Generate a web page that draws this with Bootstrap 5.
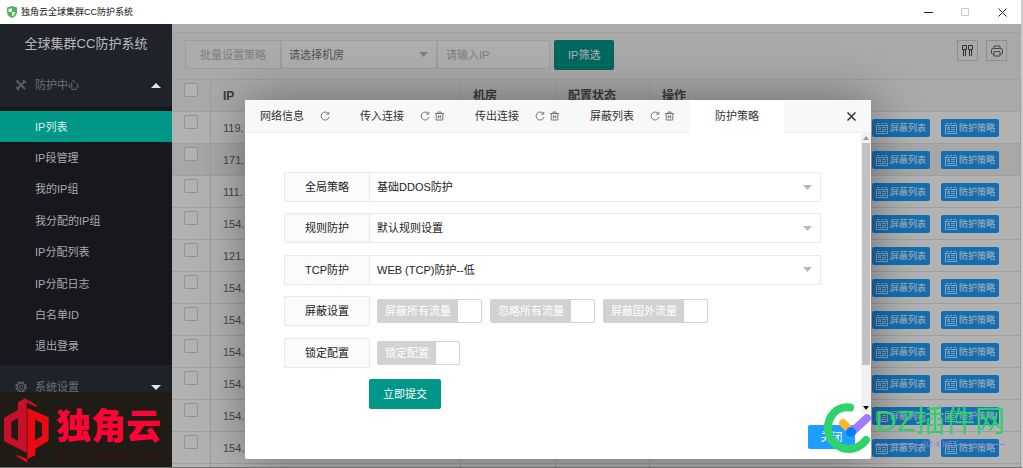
<!DOCTYPE html>
<html lang="zh-CN">
<head>
<meta charset="utf-8">
<meta name="viewport" content="width=device-width, initial-scale=1">
<title>独角云全球集群CC防护系统</title>
<link href="https://cdn.jsdelivr.net/npm/bootstrap@5.3.0/dist/css/bootstrap.min.css" rel="stylesheet">
<style>
  body { font-family: "Liberation Sans", "Noto Sans CJK SC", sans-serif; font-size: 11px; line-height: 16px; color: #333; background: #fff; }
  svg { display: block; flex: none; }
  button, input, select { font: inherit; color: inherit; }
  .app { height: 100vh; overflow: hidden; border-right: 2px solid #c8c8c8; border-bottom: 1px solid #6d6d6d; }
  .titlebar { flex: none; height: 24px; font-size: 9px; color: #111; padding: 0 14px 0 7px; }
  .titlebar button { border: 0; background: none; padding: 0; }

  .sidebar { width: 172px; background: #20222a; color: #b5b6b9; }
  .brand { height: 39px; font-size: 13px; color: #b9babd; }
  .group-head { height: 44px; padding: 0 11px 0 15px; color: #6d6f76; border: 0; background: none; }
  .group-head svg { color: #5c5e65; }
  .group-head .caret { color: #e4e4e4; }
  .submenu { background: #16181d; height: 258px; padding: 4px 0 3px; }
  .submenu a { flex: 1 1 0; padding-left: 35px; color: #a9aaac; text-decoration: none; display: flex; align-items: center; }
  .submenu a.active { background: #009688; color: #d5f0ed; }
  .logo { height: 75px; background: #1e1c14; left: 0; right: 0; bottom: 0; }
  .logo-name { font: 900 35px/44px "Noto Sans CJK SC", sans-serif; color: #ff0336; }
  .logo-sub { font-size: 10px; line-height: 12px; letter-spacing: 5px; color: #4c0d0b; }

  .main { background: #f2f2f2; }
  .strip { height: 9px; background: #f3f6f8; border-bottom: 1px solid #e6e6e6; }
  .toolbar { height: 46px; padding: 7px 14px 0 13px; }
  .toolbar .ctl { height: 29px; border: 1px solid #e2e2e2; background: #fafafa; border-radius: 0; font-size: 11px; padding: 0 8px; }
  .toolbar .batch { width: 96px; color: #b8b8b8; background: #f6f6f6; }
  .toolbar .room { width: 156px; color: #777; padding: 0 7px; }
  .toolbar .ip { width: 113px; }
  .toolbar .ip::placeholder { color: #b5b5b5; }
  .pick { appearance: none; background-repeat: no-repeat !important; background-position: right 8px center !important; background-image: url("data:image/svg+xml,%3Csvg xmlns='http://www.w3.org/2000/svg' width='9' height='5'%3E%3Cpath d='M0 0h9L4.500 5z' fill='%23b9b9b9'/%3E%3C/svg%3E") !important; }
  .btn-teal { background: #009688; color: #fff; border: 0; border-radius: 2px; height: 30px; font-size: 11px; padding: 0 14px; }
  .tool { width: 21px; height: 21px; border: 1px solid #ccc; background: none; padding: 0; color: #444; }

  .ip-table { width: 100%; table-layout: fixed; border-collapse: separate; border-spacing: 0; color: #666; }
  .ip-table th, .ip-table td { height: 32px; padding: 0 12px; border: 0 solid #e4e4e4; border-width: 1px 1px 0 0; overflow: hidden; white-space: nowrap; }
  .ip-table th { font-size: 12px; color: #555; }
  .ip-table td { background: #fff; }
  .ip-table tr.hover td { background: #f0f0f0; }
  .ip-table th:first-child, .ip-table td:first-child { vertical-align: top; padding-top: 3px; }
  .ip-table input { appearance: none; display: block; width: 14px; height: 14px; margin: 0; border: 1px solid #d2d2d2; border-radius: 2px; background: #fff; }
  .ip-table .actions { padding: 0 21px 0 0; }
  .act-list { gap: 11px; }
  .act { height: 18px; background: #1e9fff; color: #fff; border: 0; border-radius: 2px; font-size: 9px; padding: 0 4px; gap: 2px; }

  .shade { inset: 0; background: rgba(0,0,0,.3); }
  .dialog { top: 76px; left: 73px; right: 150px; background: #fff; border-radius: 2px; box-shadow: 1px 1px 50px rgba(0,0,0,.4); }
  .tabs { height: 33px; background: #f8f8f8; border-bottom: 1px solid #eee; color: #333; }
  .tab { padding: 0 15px; border: 0; background: none; height: 33px; }
  .tab.current { background: #fff; padding: 0 25px; }
  .tab svg { color: #777; }
  .dlg-body { height: 280px; }
  .scroll { width: 10px; background: #f1f1f1; padding: 3px 0; }
  .thumb { width: 8px; height: 222px; background: #c1c1c1; margin-top: 3px; }
  .policy { height: 237px; margin: 39px 40px 0 39px; }
  .field-label { width: 86px; height: 30px; border: 1px solid #e8e8e8; background: #fbfbfb; border-radius: 2px 0 0 2px; color: #222; }
  .field-select { height: 30px; border: 1px solid #e8e8e8; border-left: 0; border-radius: 0 2px 2px 0; background: #fff; padding: 0 7px; color: #222; }
  .flip-row { gap: 8px; padding-left: 7px; }
  .flip { height: 24px; border: 1px solid #d2d2d2; border-radius: 2px; background: #d2d2d2; color: #fff; padding-left: 7px; }
  .flip input { appearance: none; width: 23px; height: 22px; margin: 0 0 0 7px; background: #fff; border-radius: 1px; }
  .submit { margin-left: 85px; }
  .dlg-foot { height: 46px; padding: 2px 16px 0 0; }
  .btn-shut { height: 24px; width: 47px; background: #1e9fff; color: #fff; border: 0; border-radius: 2px; }

  .mark-site { right: 16px; bottom: 12px; pointer-events: none; }
  .mark-name { font-size: 30px; line-height: 36px; color: #2fcf6c; }
  .mark-sub { font: 8px/10px "Noto Sans CJK SC", sans-serif; color: #8d7fd8; }
  .mark-sub i { height: 1px; background: #8d7fd8; flex: 1; }
</style>
</head>
<body>
<svg width="0" height="0" class="position-absolute">
  <symbol id="i-refresh" viewBox="0 0 10 10"><path d="M8.300 2.600A4 4 0 1 0 9 6M8.800.8v2.400H6.300" fill="none" stroke="currentColor"/></symbol>
  <symbol id="i-trash" viewBox="0 0 10 10"><path d="M.5 2.500h9M3.500 2.300V1h3v1.300M1.700 2.700V9h6.600V2.700M3.800 4.200v3.300M6.200 4.200v3.300M3.500 5.800h3" fill="none" stroke="currentColor"/></symbol>
  <symbol id="i-cal" viewBox="0 0 12 12"><path d="M.5 2.500v9h11v-9M1 1.500h2.500M5 1.500h2M8.500 1.500H11M.5 3.500h11M2.500 5.500h2v2h-2zM6 5.500h4M6 7.500h4M2.500 9.500H10" fill="none" stroke="#fff" opacity=".75"/></symbol>
</svg>

<div class="app d-flex flex-column position-relative">
  <header class="titlebar d-flex align-items-center">
    <svg width="10" height="12" viewBox="0 0 10 12"><path d="M5 0 10 1.500V6q0 4-5 6Q0 10 0 6V1.500z" fill="#4db35b"/><path d="M5 2v4h3.500Q8 9 5 10.500V6H1.500V3z" fill="#dff3e0"/></svg>
    <span class="ms-1 flex-fill">独角云全球集群CC防护系统</span>
    <div class="d-flex align-items-center gap-4">
      <button type="button" aria-label="最小化" class="me-1"><svg width="9" height="9"><path d="M0 4.500h9" stroke="#222"/></svg></button>
      <button type="button" aria-label="最大化" class="me-1"><svg width="9" height="9"><path d="M.5.5h7v7h-7z" fill="none" stroke="#ccc"/></svg></button>
      <button type="button" aria-label="关闭窗口"><svg width="9" height="9"><path d="m.5.5 8 8m0-8-8 8" stroke="#222"/></svg></button>
    </div>
  </header>

  <div class="d-flex flex-fill overflow-hidden">
    <aside class="sidebar flex-shrink-0 position-relative overflow-hidden">
      <div class="brand d-flex align-items-center justify-content-center">全球集群CC防护系统</div>
      <button type="button" class="group-head w-100 d-flex align-items-center">
        <svg width="12" height="12" viewBox="0 0 12 12"><path d="m2 2 8 8M10 2 2 10" stroke="currentColor" stroke-width="2"/><path d="M1 3.500 3.500 1M8 1l3 3M1 8l3 3" stroke="currentColor" stroke-width="1.500"/></svg>
        <span class="ms-2 flex-fill text-start">防护中心</span>
        <svg class="caret" width="10" height="5"><path d="M0 5h10L5 0z" fill="currentColor"/></svg>
      </button>
      <nav class="submenu d-flex flex-column">
        <a class="active" href="#">IP列表</a>
        <a href="#">IP段管理</a>
        <a href="#">我的IP组</a>
        <a href="#">我分配的IP组</a>
        <a href="#">IP分配列表</a>
        <a href="#">IP分配日志</a>
        <a href="#">白名单ID</a>
        <a href="#">退出登录</a>
      </nav>
      <button type="button" class="group-head w-100 d-flex align-items-center">
        <svg width="12" height="12" viewBox="0 0 12 12" fill="none" stroke="currentColor"><circle cx="6" cy="6" r="4.800" stroke-width="2" stroke-dasharray="2.600 1.170"/><circle cx="6" cy="6" r="3.800"/><circle cx="6" cy="6" r="1.700"/></svg>
        <span class="ms-2 flex-fill text-start">系统设置</span>
        <svg class="caret" width="10" height="5"><path d="M0 0h10L5 5z" fill="currentColor"/></svg>
      </button>
      <div class="logo position-absolute d-flex align-items-center">
        <svg width="52" height="75" viewBox="0 0 156 225">
          <path d="M12 78 54 53V31L75 19l35 20v6L80 32v150L12 148zM34 90v46l20 11V79z" fill="#c8102a" fill-rule="evenodd"/>
          <path d="M82 48v164l-32-19v-5l32 13 24-11v-20l40-24V76zM105 83l21 11v38l-21 13z" fill="#ea0a12" fill-rule="evenodd"/>
        </svg>
        <div class="ps-1 pt-1">
          <div class="logo-name">独角云</div>
          <div class="logo-sub mt-1">DUJIAOYUN</div>
        </div>
      </div>
    </aside>

    <main class="main flex-fill position-relative overflow-hidden">
      <div class="strip"></div>
      <div class="toolbar d-flex align-items-start">
        <button type="button" class="ctl batch">批量设置策略</button>
        <select class="ctl room pick" aria-label="机房"><option>请选择机房</option></select>
        <input class="ctl ip" type="text" placeholder="请输入IP" aria-label="IP">
        <button type="button" class="btn-teal ms-1">IP筛选</button>
        <div class="ms-auto d-flex gap-2">
          <button type="button" class="tool d-flex align-items-center justify-content-center" aria-label="筛选列"><svg width="11" height="11"><path d="M.5.500h4v4h-4zM6.500.5h4v4h-4zM1.500 5v6M3.500 5v6M7.500 5v6M9.500 5v6" fill="none" stroke="currentColor"/></svg></button>
          <button type="button" class="tool d-flex align-items-center justify-content-center" aria-label="打印"><svg width="12" height="12"><path d="M3 3.500V1h6v2.500M3 9H1.500Q.5 9 .5 8V5q0-1.500 1.500-1.500h8q1.500 0 1.500 1.500v3q0 1-1 1H9M3 6.500h6V11H3z" fill="none" stroke="#666"/></svg></button>
        </div>
      </div>
      <table class="ip-table">
        <colgroup><col style="width:39px"><col style="width:250px"><col style="width:95px"><col style="width:94px"><col></colgroup>
        <thead><tr><th><input type="checkbox" aria-label="全选"></th><th>IP</th><th>机房</th><th>配置状态</th><th>操作</th></tr></thead>
        <tbody id="rows"></tbody>
      </table>

      <div class="shade position-absolute"></div>

      <section class="dialog position-absolute" role="dialog" aria-label="防护策略">
        <div class="tabs d-flex align-items-center">
          <button type="button" class="tab d-flex align-items-center"><span class="me-3">网络信息</span><svg width="10" height="10"><use href="#i-refresh"/></svg></button>
          <button type="button" class="tab d-flex align-items-center"><span class="me-3">传入连接</span><svg class="me-1" width="10" height="10"><use href="#i-refresh"/></svg><svg width="11" height="10"><use href="#i-trash"/></svg></button>
          <button type="button" class="tab d-flex align-items-center"><span class="me-3">传出连接</span><svg class="me-1" width="10" height="10"><use href="#i-refresh"/></svg><svg width="11" height="10"><use href="#i-trash"/></svg></button>
          <button type="button" class="tab d-flex align-items-center"><span class="me-3">屏蔽列表</span><svg class="me-1" width="10" height="10"><use href="#i-refresh"/></svg><svg width="11" height="10"><use href="#i-trash"/></svg></button>
          <button type="button" class="tab current">防护策略</button>
          <button type="button" class="tab ms-auto" aria-label="关闭"><svg width="9" height="9"><path d="m.5.5 8 8m0-8-8 8" stroke="#333" stroke-width="1.500"/></svg></button>
        </div>
        <div class="dlg-body d-flex">
          <form class="policy flex-fill d-flex flex-column justify-content-between">
            <div class="d-flex">
              <label class="field-label d-flex align-items-center justify-content-center" for="f1">全局策略</label>
              <select id="f1" class="field-select pick flex-fill"><option>基础DDOS防护</option></select>
            </div>
            <div class="d-flex">
              <label class="field-label d-flex align-items-center justify-content-center" for="f2">规则防护</label>
              <select id="f2" class="field-select pick flex-fill"><option>默认规则设置</option></select>
            </div>
            <div class="d-flex">
              <label class="field-label d-flex align-items-center justify-content-center" for="f3">TCP防护</label>
              <select id="f3" class="field-select pick flex-fill"><option>WEB (TCP)防护--低</option></select>
            </div>
            <div class="d-flex align-items-center">
              <span class="field-label d-flex align-items-center justify-content-center">屏蔽设置</span>
              <div class="flip-row d-flex">
                <label class="flip d-flex align-items-center">屏蔽所有流量<input type="checkbox"></label>
                <label class="flip d-flex align-items-center">忽略所有流量<input type="checkbox"></label>
                <label class="flip d-flex align-items-center">屏蔽国外流量<input type="checkbox"></label>
              </div>
            </div>
            <div class="d-flex align-items-center">
              <span class="field-label d-flex align-items-center justify-content-center">锁定配置</span>
              <div class="flip-row d-flex">
                <label class="flip d-flex align-items-center">锁定配置<input type="checkbox"></label>
              </div>
            </div>
            <button type="submit" class="btn-teal submit align-self-start">立即提交</button>
          </form>
          <div class="scroll d-flex flex-column align-items-center">
            <svg width="6" height="4"><path d="M0 4h6L3 0z" fill="#999"/></svg>
            <div class="thumb"></div>
            <svg class="mt-auto" width="6" height="4"><path d="M0 0h6L3 4z" fill="#111"/></svg>
          </div>
        </div>
        <div class="dlg-foot d-flex align-items-center justify-content-end">
          <button type="button" class="btn-shut">关闭</button>
        </div>
      </section>
    </main>
  </div>

  <div class="mark-site position-absolute d-flex">
    <svg width="52" height="52" viewBox="0 0 52 52" fill="none" stroke-linecap="round">
      <path d="M27 4.500C14 3 5 13 5 25c0 20 25 29 38 12" stroke="#2fd36b" stroke-width="8"/>
      <path d="m20 20 8 8" stroke="#ffb52e" stroke-width="8"/>
      <path d="m29 29 15-14" stroke="#a07cff" stroke-width="8"/>
      <circle cx="28" cy="29" r="5" fill="#0a7cff"/>
    </svg>
    <div>
      <div class="mark-name">DZ插件网</div>
      <div class="mark-sub d-flex align-items-center"><i></i>DZ-X.NET<i></i></div>
    </div>
  </div>
</div>

<script>
  // One table row per address block; the last one only shows its top edge.
  const ips = ['119.', '171.', '111.', '154.', '121.', '154.', '154.', '154.', '154.', '154.', '154.', ''];
  const act = t => `<button type="button" class="act d-flex align-items-center"><svg width="12" height="12"><use href="#i-cal"/></svg>${t}</button>`;
  const acts = `<div class="act-list d-flex justify-content-end">${act('屏蔽列表')}${act('防护策略')}</div>`;
  document.getElementById('rows').innerHTML = ips.map((ip, i) =>
    `<tr class="${i === 1 ? 'hover' : ''}"><td><input type="checkbox" aria-label="选择"></td><td>${ip}</td><td></td><td></td>` +
    `<td class="actions">${ip && acts}</td></tr>`).join('');
</script>
<script src="https://cdn.jsdelivr.net/npm/bootstrap@5.3.0/dist/js/bootstrap.bundle.min.js"></script>
</body>
</html>
